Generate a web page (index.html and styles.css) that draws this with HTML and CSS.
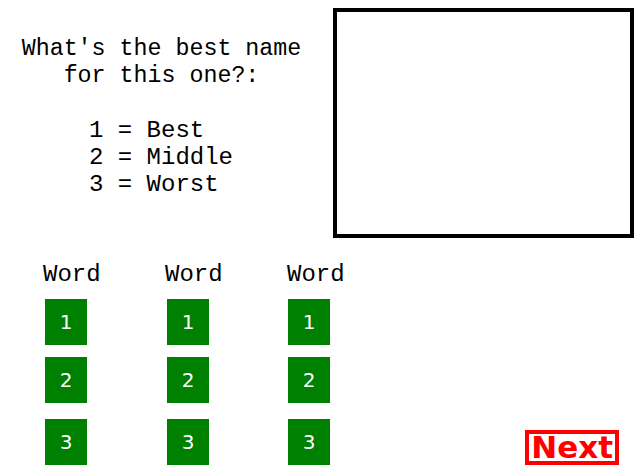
FILE: index.html
```html
<!DOCTYPE html>
<html lang="en">

<head>
    <meta charset="UTF-8">
    <meta name="viewport" content="width=device-width, initial-scale=1.0">
    <title>Name Ranking</title>
    <link rel="stylesheet" href="styles.css">
</head>

<body>
    <main class="quiz">
        <!-- Question and picture -->
        <section class="top">
            <div class="prompt">
                <p class="question">What's the best name<br>for this one?:</p>
                <ul class="scale">
                    <li>1 = Best</li>
                    <li>2 = Middle</li>
                    <li>3 = Worst</li>
                </ul>
            </div>
            <div class="picture"></div>
        </section>

        <!-- Ranking buttons -->
        <section class="bottom">
            <div class="choices">
                <div class="choice">
                    <h2>Word</h2>
                    <button class="rank rank-1">1</button>
                    <button class="rank rank-2">2</button>
                    <button class="rank rank-3">3</button>
                </div>
                <div class="choice">
                    <h2>Word</h2>
                    <button class="rank rank-1">1</button>
                    <button class="rank rank-2">2</button>
                    <button class="rank rank-3">3</button>
                </div>
                <div class="choice">
                    <h2>Word</h2>
                    <button class="rank rank-1">1</button>
                    <button class="rank rank-2">2</button>
                    <button class="rank rank-3">3</button>
                </div>
            </div>
            <button class="next-btn">Next</button>
        </section>
    </main>
</body>

</html>
```

FILE: styles.css
```css
/* General Styles */
body {
    margin: 0;
    padding: 0;
    background-color: #fff;
    color: #000;
    font-family: 'Courier New', 'Nimbus Mono PS', 'FreeMono', 'Liberation Mono', monospace;
    font-size: 24px;
    line-height: 27px;
}

h2, p, ul {
    margin: 0;
    padding: 0;
}

ul {
    list-style: none;
}

button {
    font: inherit;
    cursor: pointer;
}

/* Top Section */
.top {
    display: flex;
    align-items: flex-start;
    height: 238px;
}

.prompt {
    width: 331px;
    padding-top: 36px;
}

.question {
    width: 323px;
    font-size: 23.3px;
    text-align: center;
    margin-bottom: 27px;
}

.scale {
    padding-left: 89px;
}

.picture {
    width: 293px;
    height: 222px;
    margin-top: 8px;
    margin-left: 2px;
    border: 4px solid #000;
}

/* Bottom Section */
.bottom {
    display: flex;
    justify-content: space-between;
    align-items: flex-end;
    margin-top: 22px;
    padding-right: 16px;
}

.choices {
    display: flex;
    padding-left: 43px;
}

.choice {
    display: flex;
    flex-direction: column;
    align-items: flex-start;
    width: 122px;
}

.choice h2 {
    font-size: 24px;
    font-weight: normal;
    margin-top: 1px;
    margin-bottom: 11px;
}

.rank {
    width: 42px;
    height: 46px;
    margin-left: 2px;
    padding: 0;
    border: none;
    background-color: #008000;
    color: #fff;
    font-family: 'DejaVu Sans', Verdana, sans-serif;
    font-size: 20px;
}

.rank-2 {
    margin-top: 12px;
}

.rank-3 {
    margin-top: 16px;
}

.choice:last-child .rank {
    margin-left: 1px;
}

.next-btn {
    padding: 0 2px;
    border: 4px solid #ff0000;
    background-color: #fff;
    color: #ff0000;
    font-family: 'DejaVu Sans', Verdana, sans-serif;
    font-size: 31px;
    font-weight: bold;
    line-height: 27px;
}
```
